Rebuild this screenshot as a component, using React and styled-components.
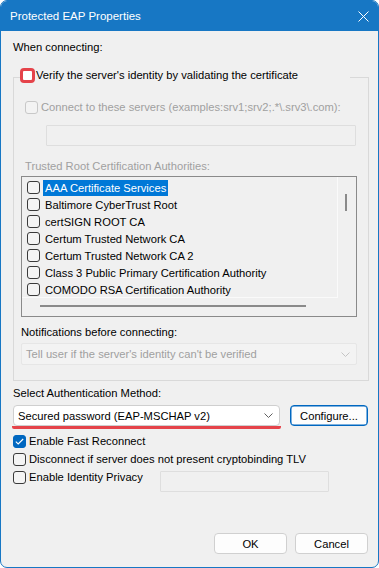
import React from 'react';
import styled, { createGlobalStyle } from 'styled-components';

const Global = createGlobalStyle`
  html, body { margin: 0; padding: 0; background: #ffffff; }
  body { font-family: "Liberation Sans", Arial, sans-serif; font-size: 11.2px; }
  *, *::before, *::after { box-sizing: border-box; }
`;

const FONT = `"Liberation Sans", Arial, sans-serif`;

const Window = styled.div`
  width: 379px;
  height: 568px;
  display: flex;
  flex-direction: column;
  border: 1px solid #1777c4;
  border-radius: 7px;
  overflow: hidden;
  background: #f0f0f0;
  font-family: ${FONT};
  font-size: 11.2px;
  color: #000;
`;

const TitleBar = styled.div`
  height: 30px;
  flex: none;
  display: flex;
  align-items: center;
  justify-content: space-between;
  padding: 0 9px 0 9px;
  background: #1777c4;
  color: #fff;
  font-size: 11.5px;
`;

const Body = styled.div`
  flex: 1;
  display: flex;
  flex-direction: column;
  padding: 9px 10px 13px 12px;
`;

const Label = styled.div`
  height: 15px;
  line-height: 15px;
  white-space: nowrap;
  color: ${p => (p.$disabled ? '#a0a0a0' : '#000')};
  margin-top: ${p => p.$mt || 0}px;
  margin-left: ${p => p.$ml || 0}px;
`;

const Group = styled.fieldset`
  margin: 13px -1px 0 0;
  padding: 13px 11px 15px 7px;
  border: 1px solid #d9d9d9;
  border-radius: 0;
  min-width: 0;
`;

const Legend = styled.legend`
  width: 330px;
  height: 18px;
  padding: 0;
  margin-left: -1px;
  display: flex;
  align-items: flex-start;
  gap: 1px;
  line-height: 15px;
`;

const Box = styled.span`
  flex: none;
  display: inline-flex;
  align-items: center;
  justify-content: center;
  width: ${p => (p.$variant === 'marked' ? 15 : 13)}px;
  height: ${p => (p.$variant === 'marked' ? 15 : 13)}px;
  border-radius: ${p => (p.$variant === 'marked' ? 4 : 3)}px;
  border: ${p =>
    p.$variant === 'marked'
      ? '3px solid #e5434a'
      : p.$variant === 'checked'
      ? '1px solid #0067c0'
      : p.$variant === 'disabled'
      ? '1px solid #c8c8c8'
      : '1px solid #3a3a3a'};
  background: ${p =>
    p.$variant === 'marked'
      ? '#fff'
      : p.$variant === 'checked'
      ? '#0067c0'
      : p.$variant === 'disabled'
      ? '#f3f3f3'
      : '#f4f4f4'};
`;

const CheckRow = styled.div`
  display: flex;
  align-items: ${p => (p.$top ? 'flex-start' : 'center')};
  height: ${p => p.$h || 18}px;
  gap: 3px;
  margin-left: ${p => p.$ml || 0}px;
  margin-top: ${p => p.$mt || 0}px;
  white-space: nowrap;
  color: ${p => (p.$disabled ? '#a0a0a0' : '#000')};
`;

const LabelWrap = styled.div`
  display: flex;
  align-items: center;
  gap: 3px;
  height: 18px;
  width: ${p => p.$w || 'auto'};
  flex: none;
`;

const TextInput = styled.div`
  height: 21px;
  width: ${p => p.$w};
  margin-left: ${p => p.$ml || 0}px;
  margin-top: ${p => p.$mt || 0}px;
  border: 1px solid #dedede;
  background: #f0f0f0;
  border-radius: 1px;
`;

const ListBox = styled.div`
  margin-top: 2px;
  height: 141px;
  display: grid;
  grid-template-columns: 1fr 18px;
  grid-template-rows: 1fr 18px;
  border: 1px solid #8a8a8a;
  background: #f0f0f0;
`;

const Viewport = styled.div`
  border-right: 1px solid #fafafa;
  border-bottom: 1px solid #fafafa;
  padding: 2px 0 0 5px;
  overflow: hidden;
`;

const VTrack = styled.div`
  padding: 17px 0 0 7px;
`;

const VThumb = styled.div`
  width: 2px;
  height: 17px;
  background: #8a8a8a;
`;

const HTrack = styled.div`
  padding: 7px 0 0 18px;
`;

const HThumb = styled.div`
  width: 266px;
  height: 2px;
  background: #8a8a8a;
`;

const Item = styled.div`
  display: flex;
  align-items: center;
  height: 17px;
  white-space: nowrap;
`;

const ItemText = styled.span`
  margin-left: 3px;
  padding: 0 2px;
  height: 16px;
  line-height: 16px;
  background: ${p => (p.$selected ? '#0078d7' : 'transparent')};
  color: ${p => (p.$selected ? '#fff' : '#000')};
`;

const Select = styled.div`
  height: ${p => p.$h || 21}px;
  width: ${p => p.$w || 'auto'};
  flex: ${p => (p.$w ? 'none' : '1')};
  display: flex;
  align-items: center;
  justify-content: space-between;
  padding: 0 6px 0 4px;
  border: 1px solid ${p => (p.$disabled ? '#e6e6e6' : '#cfcfcf')};
  border-radius: ${p => (p.$disabled ? 2 : 4)}px;
  background: ${p => (p.$disabled ? '#f3f3f3' : '#fff')};
  color: ${p => (p.$disabled ? '#a0a0a0' : '#000')};
  white-space: nowrap;
  margin-top: ${p => p.$mt || 0}px;
`;

const Marked = styled.div`
  width: 269px;
  flex: none;
  margin-left: -1px;
  padding: 0 1px;
  border-bottom: 3px solid #e5434a;
  border-radius: 0 0 2px 2px;
  display: flex;
`;

const AuthRow = styled.div`
  display: flex;
  align-items: flex-start;
  gap: 9px;
  margin-top: 4px;
`;

const Button = styled.button`
  height: 21px;
  width: ${p => p.$w}px;
  padding: 0;
  font-family: ${FONT};
  font-size: 11.2px;
  color: #000;
  background: #fdfdfd;
  border: 1px solid ${p => (p.$primary ? '#0067c0' : '#d0d0d0')};
  border-radius: 4px;
  box-shadow: ${p => (p.$primary ? 'inset 0 0 0 0.5px #0067c0' : 'none')};
`;

const Footer = styled.div`
  margin-top: auto;
  display: flex;
  justify-content: flex-end;
  gap: 8px;
`;

const Chevron = ({ color = '#606060' }) => (
  <svg width="9" height="5" viewBox="0 0 9 5">
    <polyline points="0.5,0.5 4.5,4.5 8.5,0.5" fill="none" stroke={color} strokeWidth="1" />
  </svg>
);

const Check = () => (
  <svg width="9" height="7" viewBox="0 0 9 7">
    <polyline points="0.8,3.6 3.2,6 8.2,1" fill="none" stroke="#fff" strokeWidth="1.1" />
  </svg>
);

const CloseIcon = () => (
  <svg width="11" height="11" viewBox="0 0 11 11">
    <line x1="0.5" y1="0.5" x2="10.5" y2="10.5" stroke="#fff" strokeWidth="1" />
    <line x1="10.5" y1="0.5" x2="0.5" y2="10.5" stroke="#fff" strokeWidth="1" />
  </svg>
);

const CAS = [
  'AAA Certificate Services',
  'Baltimore CyberTrust Root',
  'certSIGN ROOT CA',
  'Certum Trusted Network CA',
  'Certum Trusted Network CA 2',
  'Class 3 Public Primary Certification Authority',
  'COMODO RSA Certification Authority',
];

export default function App() {
  return (
    <>
      <Global />
      <Window>
        <TitleBar>
          <span>Protected EAP Properties</span>
          <CloseIcon />
        </TitleBar>
        <Body>
          <Label>When connecting:</Label>
          <Group>
            <Legend>
              <Box $variant="marked" />
              <span>Verify the server's identity by validating the certificate</span>
            </Legend>
            <CheckRow $disabled $h={16} $ml={4}>
              <Box $variant="disabled" />
              <span>Connect to these servers (examples:srv1;srv2;.*\.srv3\.com):</span>
            </CheckRow>
            <TextInput $w="310px" $ml={25} $mt={10} />
            <Label $disabled $mt={13} $ml={4}>Trusted Root Certification Authorities:</Label>
            <ListBox>
              <Viewport>
                {CAS.map((c, i) => (
                  <Item key={c}>
                    <Box />
                    <ItemText $selected={i === 0}>{c}</ItemText>
                  </Item>
                ))}
              </Viewport>
              <VTrack>
                <VThumb />
              </VTrack>
              <HTrack>
                <HThumb />
              </HTrack>
            </ListBox>
            <Label $mt={8}>Notifications before connecting:</Label>
            <Select $disabled $h={22} $mt={3}>
              <span>Tell user if the server's identity can't be verified</span>
              <Chevron color="#c4c4c4" />
            </Select>
          </Group>
          <Label $mt={5}>Select Authentication Method:</Label>
          <AuthRow>
            <Marked>
              <Select>
                <span>Secured password (EAP-MSCHAP v2)</span>
                <Chevron />
              </Select>
            </Marked>
            <Button $primary $w={79}>Configure...</Button>
          </AuthRow>
          <CheckRow $mt={3}>
            <Box $variant="checked"><Check /></Box>
            <span>Enable Fast Reconnect</span>
          </CheckRow>
          <CheckRow>
            <Box />
            <span>Disconnect if server does not present cryptobinding TLV</span>
          </CheckRow>
          <CheckRow $top $h={24}>
            <LabelWrap $w="144px">
              <Box />
              <span>Enable Identity Privacy</span>
            </LabelWrap>
            <TextInput $w="169px" $mt={3} />
          </CheckRow>
          <Footer>
            <Button $w={73}>OK</Button>
            <Button $w={73}>Cancel</Button>
          </Footer>
        </Body>
      </Window>
    </>
  );
}
